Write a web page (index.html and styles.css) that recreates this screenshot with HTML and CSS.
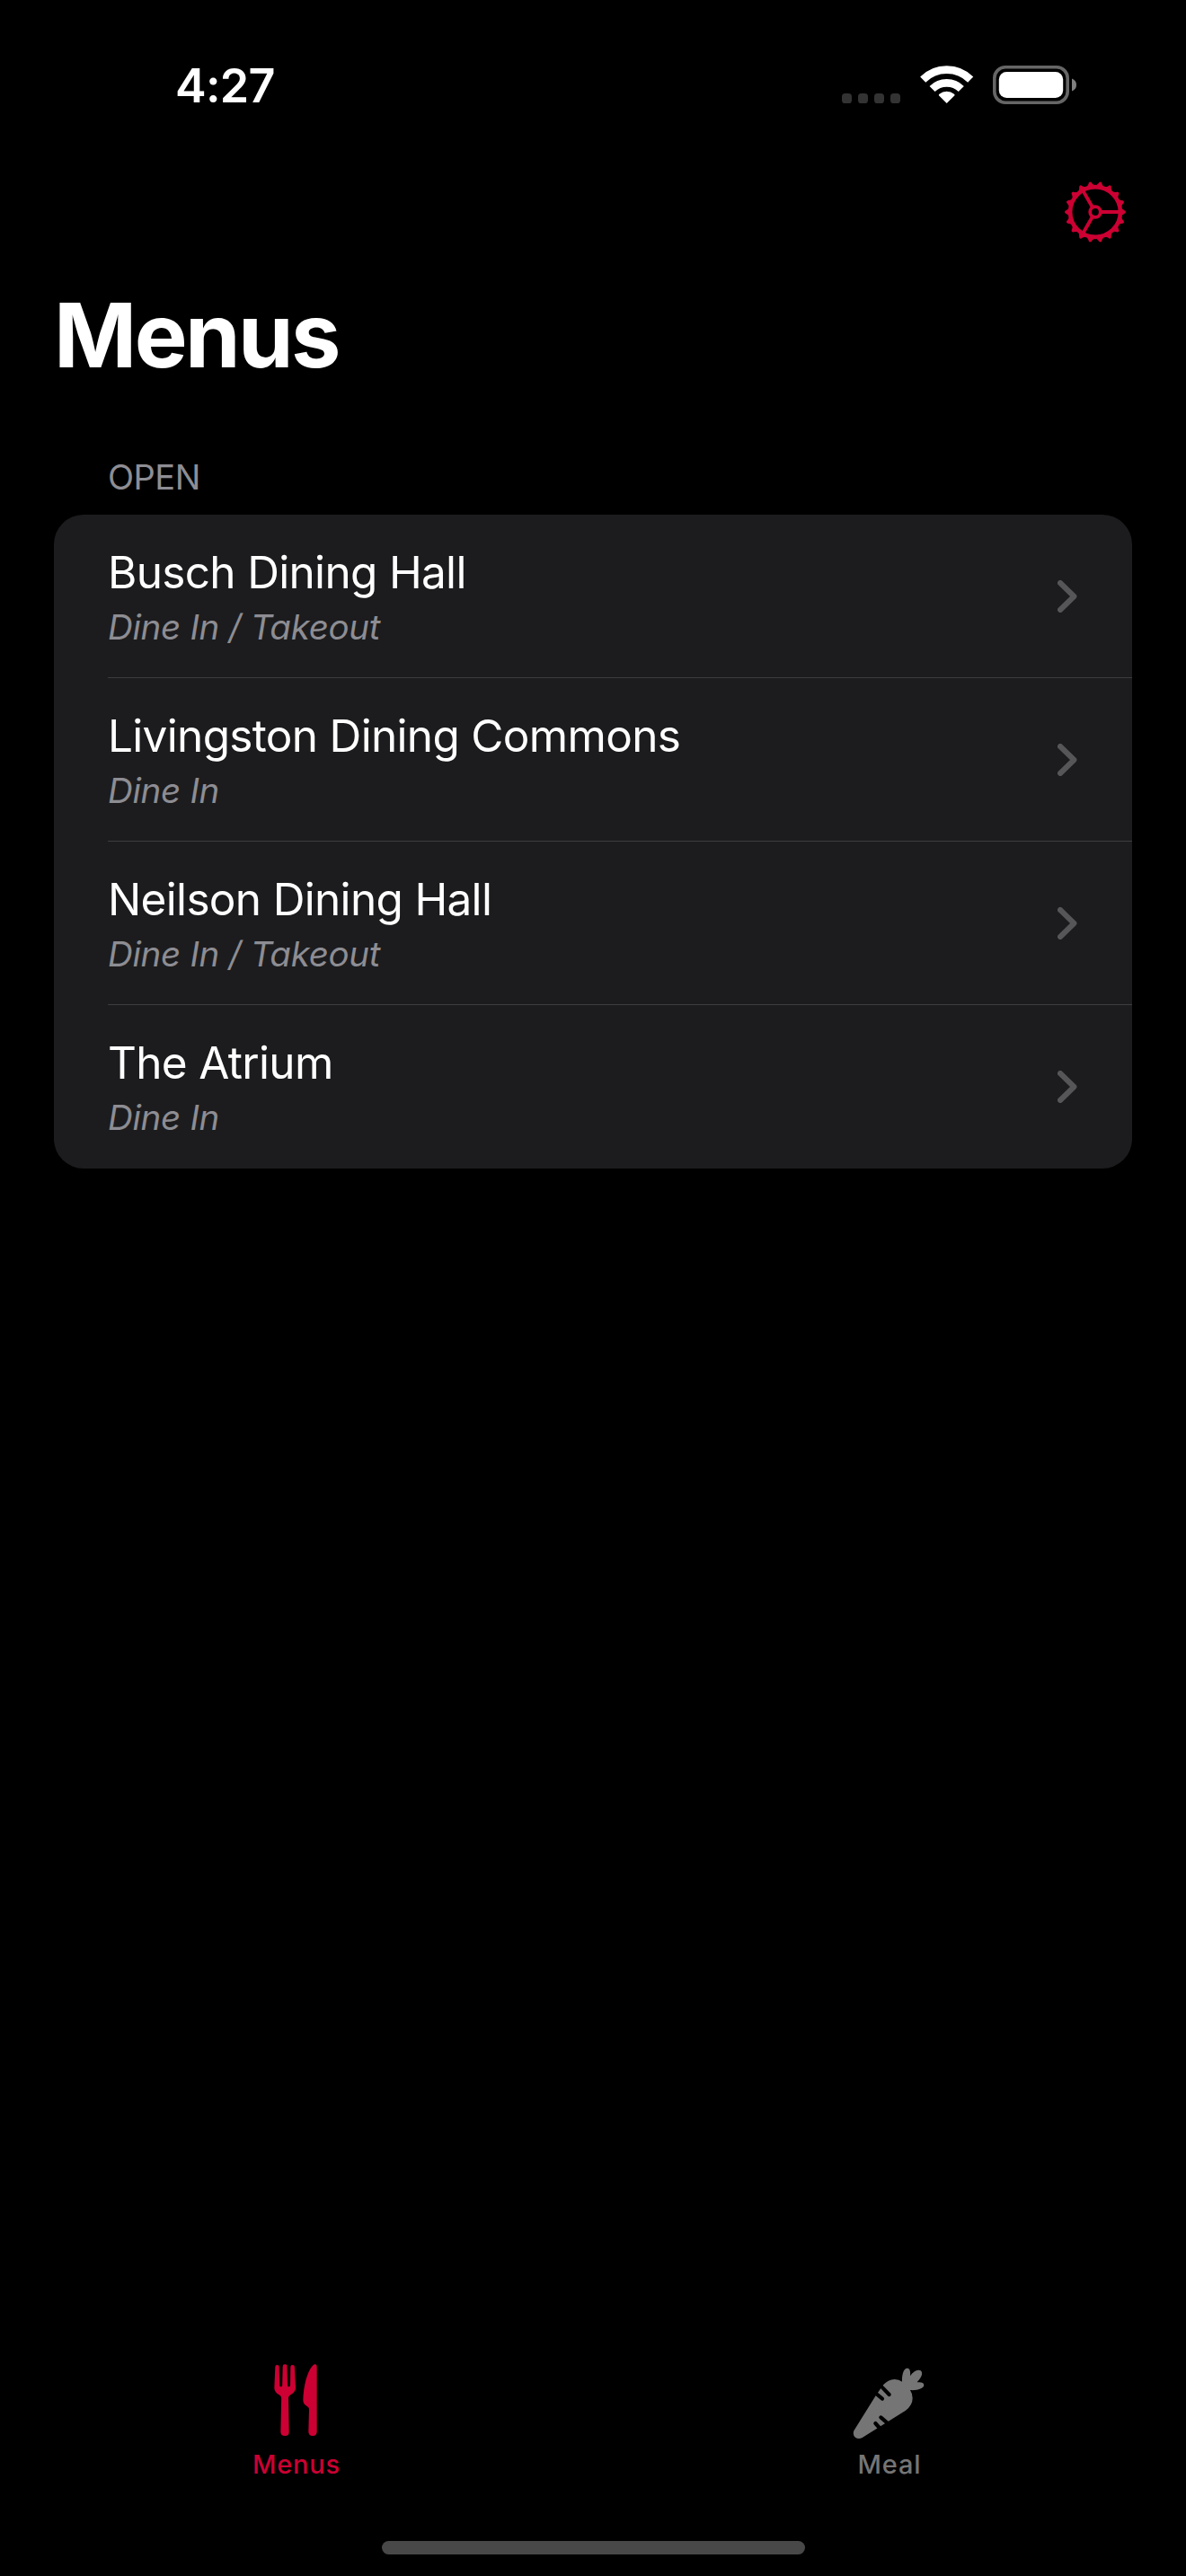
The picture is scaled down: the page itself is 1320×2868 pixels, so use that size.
FILE: index.html
```html
<!DOCTYPE html>
<html lang="en">
<head>
<meta charset="utf-8">
<title>Menus</title>
<link rel="stylesheet" href="styles.css">
</head>
<body>
<div class="screen">
  <header class="status">
    <span class="time">4:27</span>
    <svg class="status-icons" viewBox="0 0 262 43" width="262" height="43">
      <g fill="#333"><rect x="0" y="31" width="11" height="11" rx="3.6"/><rect x="18" y="31" width="11" height="11" rx="3.6"/><rect x="36" y="31" width="11" height="11" rx="3.6"/><rect x="54" y="31" width="11" height="11" rx="3.6"/></g>
      <g fill="none" stroke="#fff" stroke-width="8.6"><path d="M90.2 15.6A37.5 37.5 0 0 1 143.2 15.6"/><path d="M100.6 26A22.8 22.8 0 0 1 132.8 26"/></g>
      <path fill="#fff" d="M116.7 42L107.9 33.2Q107.6 32.3 108.4 31.7A13.6 13.6 0 0 1 125 31.7Q125.8 32.3 125.5 33.2Z"/>
      <rect x="169.8" y="1.8" width="81.4" height="39.4" rx="12.2" fill="none" stroke="#666" stroke-width="3.6"/>
      <rect x="174.8" y="7" width="71.4" height="29" rx="8.5" fill="#fff"/>
      <path fill="#808080" d="M256 14.6Q261 16.5 261 21.5T256 28.4Z"/>
    </svg>
  </header>
  <div class="toolbar">
    <svg class="gear" viewBox="-35 -35 70 70" width="70" height="70">
      <defs><path id="tooth" d="M28 -4.6C31.3 -3.2 31.6 -1.8 33.3 -1.5Q34.7 0 33.3 1.5C31.6 1.8 31.3 3.2 28 4.6Z"/></defs>
      <g fill="none" stroke="#cc0033" stroke-width="4.6"><circle r="27.9"/><circle r="5.8" stroke-width="3.8"/><path stroke-width="3.9" d="M7 0H27M-3.5 6.06L-13.5 23.4M-3.5 -6.06L-13.5 -23.4"/></g>
      <g fill="#cc0033">
        <use href="#tooth"/><use href="#tooth" transform="rotate(20)"/><use href="#tooth" transform="rotate(40)"/><use href="#tooth" transform="rotate(60)"/><use href="#tooth" transform="rotate(80)"/><use href="#tooth" transform="rotate(100)"/><use href="#tooth" transform="rotate(120)"/><use href="#tooth" transform="rotate(140)"/><use href="#tooth" transform="rotate(160)"/><use href="#tooth" transform="rotate(180)"/><use href="#tooth" transform="rotate(200)"/><use href="#tooth" transform="rotate(220)"/><use href="#tooth" transform="rotate(240)"/><use href="#tooth" transform="rotate(260)"/><use href="#tooth" transform="rotate(280)"/><use href="#tooth" transform="rotate(300)"/><use href="#tooth" transform="rotate(320)"/><use href="#tooth" transform="rotate(340)"/>
      </g>
    </svg>
  </div>
  <h1 class="title">Menus</h1>
  <main class="content">
    <h2 class="section">OPEN</h2>
    <ul class="card">
      <li class="row"><div class="row-text"><div class="name">Busch Dining Hall</div><div class="detail">Dine In / Takeout</div></div><svg class="chevron" viewBox="0 0 22 36" width="22" height="36"><path d="M3 3L18.4 18L3 33"/></svg></li>
      <li class="row"><div class="row-text"><div class="name">Livingston Dining Commons</div><div class="detail">Dine In</div></div><svg class="chevron" viewBox="0 0 22 36" width="22" height="36"><path d="M3 3L18.4 18L3 33"/></svg></li>
      <li class="row"><div class="row-text"><div class="name">Neilson Dining Hall</div><div class="detail">Dine In / Takeout</div></div><svg class="chevron" viewBox="0 0 22 36" width="22" height="36"><path d="M3 3L18.4 18L3 33"/></svg></li>
      <li class="row"><div class="row-text"><div class="name">The Atrium</div><div class="detail">Dine In</div></div><svg class="chevron" viewBox="0 0 22 36" width="22" height="36"><path d="M3 3L18.4 18L3 33"/></svg></li>
    </ul>
  </main>
  <nav class="tabs">
    <div class="tab active">
      <svg viewBox="0 0 360 330" width="120" height="110" fill="currentColor">
        <path d="M109 75Q109 69 115.500 69T122 75L123.500 138Q124 142 128 142T132.500 138L134 74Q134 67 141.500 67T148.500 74L150 138Q150.500 142 154.500 142T159 138L160 75Q160.500 69 167 69T173.500 75L177 145Q177 157 167 164L158 170Q153 173 153 180L155 293Q155 306 141.500 306T127 293L129.500 180Q129.500 173 124 170L115 164Q106 157 106 145Z"/>
        <path d="M248 76V292Q248 306 234 306T220 292L222 217Q222 211 216 208L208 202Q202 198 202 187C203 140 215 92 234 71Q240 66 244 67Q248 69 248 76Z"/>
      </svg>
      <span class="tab-label">Menus</span>
    </div>
    <div class="tab">
      <svg viewBox="0 0 420 330" width="140" height="110">
        <path fill="currentColor" d="M91 289L163 173L189 136Q205 118 227 117Q242 117 252 125C251 104 256 80 269 80C280 80 280 94 279 106C290 90 304 83 314 88C325 98 313 115 302 127C316 125 325 129 325 136C325 150 298 155 279 153Q287 165 287 180Q287 204 264 221L119 312Q106 319 96 311T91 289Z"/>
        <path fill="none" stroke="#000" stroke-width="12.500" stroke-linecap="round" d="M184 142L209 168M162 162L186 182M181 244L209 268M163 264L179 282"/>
      </svg>
      <span class="tab-label">Meal</span>
    </div>
  </nav>
  <div class="home"></div>
</div>
</body>
</html>
```
FILE: styles.css
```css
* { box-sizing: border-box; }
body { margin: 0; background: #000; }
.screen {
  width: 1320px; height: 2868px;
  display: flex; flex-direction: column;
  background: #000; color: #fff;
  font-family: Inter, "Liberation Sans", sans-serif;
}
.status {
  height: 186px; padding: 66px 121px 0 195px;
  display: flex; justify-content: space-between; align-items: flex-start;
}
.time { font-size: 52px; line-height: 60px; font-weight: 600; letter-spacing: -0.7px; }
.status-icons { margin-top: 7px; }
.toolbar { height: 127px; padding: 15px 66px 0 0; display: flex; justify-content: flex-end; }
.title {
  margin: 0; padding-left: 60px; height: 177px;
  font-size: 99px; line-height: 120px; font-weight: 700; letter-spacing: -2.6px;
}
.content { flex: 1; padding: 0 60px; }
.section {
  margin: 0; padding-left: 60px;
  font-size: 38px; line-height: 83px; font-weight: 400; color: #8d8d93; letter-spacing: -0.5px;
}
.card { margin: 0; padding: 0; list-style: none; background: #1c1c1e; border-radius: 33px; }
.row {
  height: 182px; margin-left: 60px; padding-right: 61px;
  display: flex; justify-content: space-between; align-items: center;
  border-bottom: 1px solid #3d3d41;
}
.row:last-child { border-bottom-color: transparent; }
.row-text { align-self: flex-start; padding-top: 32px; }
.name { font-size: 49.5px; line-height: 64px; letter-spacing: -0.68px; }
.detail { font-size: 38.5px; line-height: 59px; font-style: italic; color: #8d8d93; letter-spacing: -0.28px; }
.chevron { fill: none; stroke: #565658; stroke-width: 6; stroke-linecap: round; stroke-linejoin: round; }
.tabs { height: 219px; display: flex; }
.tab { flex: 1; color: #757575; display: flex; flex-direction: column; align-items: center; }
.active { color: #cc0033; }
.tab svg { display: block; }
.tab-label { font-size: 29px; line-height: 47px; font-weight: 500; letter-spacing: 0.8px; }
.home { width: 471px; height: 15px; margin: 0 auto 24px; border-radius: 8px; background: #484848; }
```
